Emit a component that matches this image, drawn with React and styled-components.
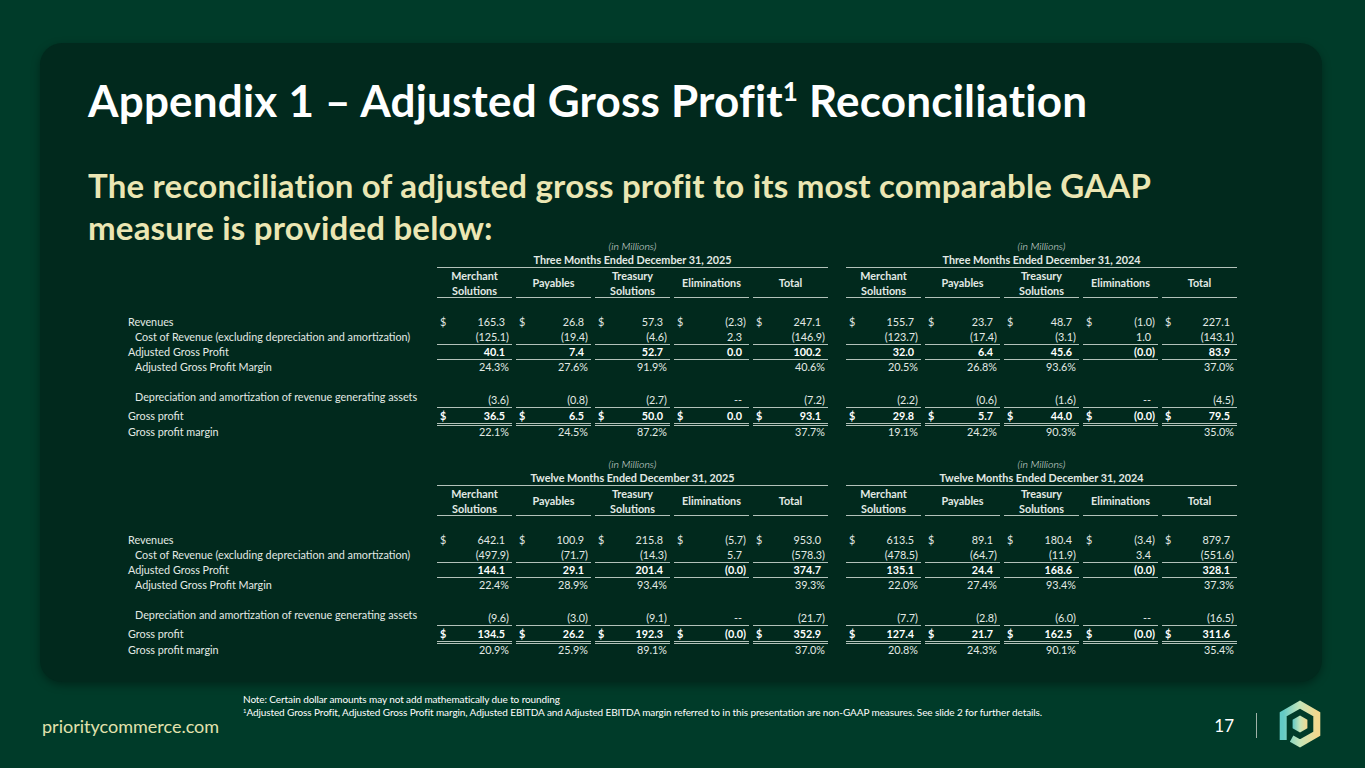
import React from "react";
import styled, { createGlobalStyle } from "styled-components";

/* Global */

const GlobalStyle = createGlobalStyle`
  body {
    margin: 0;
    background-color: #003b29;
    font-family: Lato, "Open Sans", sans-serif;
  }
`;

/* Styled Components */

const Slide = styled.div`
  width: 1365px;
  height: 768px;
  display: flex;
  flex-direction: column;
  overflow: hidden;
`;

const Panel = styled.div`
  box-sizing: border-box;
  width: 1282px;
  height: 639px;
  margin: 43px 0 0 40px;
  padding: 32px 48px 0 48px;
  border-radius: 22px;
  background-color: #01291d;
  box-shadow: rgba(0, 0, 0, 0.35) 0px 3px 8px;
`;

const Title = styled.h1`
  margin: 0;
  font-size: 44px;
  line-height: 50px;
  font-weight: 700;
  letter-spacing: 0.2px;
  color: #ffffff;

  sup {
    font-size: 26px;
    line-height: 0;
    vertical-align: 16px;
  }
`;

const Subtitle = styled.h2`
  margin: 39px 0 -8px 0;
  font-size: 33px;
  line-height: 42px;
  font-weight: 700;
  letter-spacing: 0.2px;
  color: #ebe6b3;
  max-width: 1100px;
`;

const TableBlock = styled.div`
  margin-left: 40px;
  margin-top: ${(props) => props.$top || 0}px;
  font-size: 10.8px;
  color: #e3e9e5;
`;

const Row = styled.div`
  display: flex;
  height: ${(props) => props.$h || 15}px;
  margin-top: ${(props) => props.$gap || 0}px;
  line-height: 15px;
`;

const Label = styled.div`
  box-sizing: border-box;
  width: 309px;
  padding-left: ${(props) => (props.$indent ? 7 : 0)}px;
  white-space: nowrap;
  align-self: flex-start;
`;

const Groups = styled.div`
  display: flex;
  gap: 18px;
`;

const Group = styled.div`
  display: grid;
  grid-template-columns: repeat(5, 75px);
  column-gap: 4px;
`;

const Caption = styled.div`
  width: 391px;
  text-align: center;
  font-style: italic;
  font-weight: 300;
  font-size: 10.5px;
  line-height: 12px;
`;

const Period = styled.div`
  box-sizing: border-box;
  width: 391px;
  height: 15px;
  line-height: 14px;
  text-align: center;
  font-weight: 700;
  border-bottom: 1px solid #b3c2ba;
`;

const Head = styled.div`
  box-sizing: border-box;
  height: 30px;
  display: flex;
  align-items: center;
  justify-content: center;
  text-align: center;
  font-weight: 700;
  line-height: 15px;
  border-bottom: 1px solid #b3c2ba;
`;

const lines = {
  none: "none",
  single: "1px solid #b3c2ba",
  double: "3px double #b3c2ba",
};

const Cell = styled.div`
  box-sizing: border-box;
  display: flex;
  justify-content: space-between;
  align-items: ${(props) => (props.$bottom ? "flex-end" : "center")};
  padding: 0 3px;
  border-bottom: ${(props) => lines[props.$line || "none"]};
  font-weight: ${(props) => (props.$bold ? 700 : 400)};
  color: ${(props) => (props.$bold ? "#ffffff" : "inherit")};
`;

const Value = styled.span`
  padding-right: ${(props) => (props.$pad ? 4 : 0)}px;
`;

const Footer = styled.div`
  flex: 1;
  display: flex;
  align-items: center;
  padding: 0 43px 0 42px;
`;

const Brand = styled.div`
  width: 201px;
  margin-top: 2px;
  font-size: 18px;
  color: #e2e2ae;
`;

const Notes = styled.div`
  flex: 1;
  align-self: flex-start;
  margin-top: 11px;
  font-size: 10px;
  line-height: 13px;
  letter-spacing: -0.1px;
  color: #ffffff;

  sup {
    font-size: 6px;
    vertical-align: 3px;
    line-height: 0;
  }
`;

const PageNumber = styled.div`
  font-size: 17px;
  color: #ffffff;
  margin-right: 22px;
`;

const Divider = styled.div`
  width: 1px;
  height: 25px;
  background-color: #9fb2a8;
`;

const LogoBox = styled.div`
  width: 44px;
  height: 50px;
  margin-left: 21px;
  margin-top: -2px;
`;

/* Data */

const tables = [
  {
    periods: ["Three Months Ended December 31, 2025", "Three Months Ended December 31, 2024"],
    rows: [
      ["165.3", "26.8", "57.3", "(2.3)", "247.1", "155.7", "23.7", "48.7", "(1.0)", "227.1"],
      ["(125.1)", "(19.4)", "(4.6)", "2.3", "(146.9)", "(123.7)", "(17.4)", "(3.1)", "1.0", "(143.1)"],
      ["40.1", "7.4", "52.7", "0.0", "100.2", "32.0", "6.4", "45.6", "(0.0)", "83.9"],
      ["24.3%", "27.6%", "91.9%", "", "40.6%", "20.5%", "26.8%", "93.6%", "", "37.0%"],
      ["(3.6)", "(0.8)", "(2.7)", "--", "(7.2)", "(2.2)", "(0.6)", "(1.6)", "--", "(4.5)"],
      ["36.5", "6.5", "50.0", "0.0", "93.1", "29.8", "5.7", "44.0", "(0.0)", "79.5"],
      ["22.1%", "24.5%", "87.2%", "", "37.7%", "19.1%", "24.2%", "90.3%", "", "35.0%"],
    ],
  },
  {
    periods: ["Twelve Months Ended December 31, 2025", "Twelve Months Ended December 31, 2024"],
    rows: [
      ["642.1", "100.9", "215.8", "(5.7)", "953.0", "613.5", "89.1", "180.4", "(3.4)", "879.7"],
      ["(497.9)", "(71.7)", "(14.3)", "5.7", "(578.3)", "(478.5)", "(64.7)", "(11.9)", "3.4", "(551.6)"],
      ["144.1", "29.1", "201.4", "(0.0)", "374.7", "135.1", "24.4", "168.6", "(0.0)", "328.1"],
      ["22.4%", "28.9%", "93.4%", "", "39.3%", "22.0%", "27.4%", "93.4%", "", "37.3%"],
      ["(9.6)", "(3.0)", "(9.1)", "--", "(21.7)", "(7.7)", "(2.8)", "(6.0)", "--", "(16.5)"],
      ["134.5", "26.2", "192.3", "(0.0)", "352.9", "127.4", "21.7", "162.5", "(0.0)", "311.6"],
      ["20.9%", "25.9%", "89.1%", "", "37.0%", "20.8%", "24.3%", "90.1%", "", "35.4%"],
    ],
  },
];

// one spec per line of the reconciliation
const rowSpecs = [
  { label: "Revenues", dollar: true },
  { label: "Cost of Revenue (excluding depreciation and amortization)", indent: true, line: "single" },
  { label: "Adjusted Gross Profit", bold: true, line: "single" },
  { label: "Adjusted Gross Profit Margin", indent: true },
  { label: "Depreciation and amortization of revenue generating assets", indent: true, line: "single", dep: true },
  { label: "Gross profit", dollar: true, bold: true, line: "double" },
  { label: "Gross profit margin" },
];

const columns = [
  ["Merchant", "Solutions"],
  ["Payables"],
  ["Treasury", "Solutions"],
  ["Eliminations"],
  ["Total"],
];

/* Functions */

const needsPad = (v) => v !== "" && !v.endsWith(")") && !v.endsWith("%");

const rowHeight = (spec) => (spec.dep ? 19 : spec.line === "double" ? 16 : 15);

const DataCells = ({ values, spec }) =>
  values.map((v, i) => (
    <Cell key={i} $line={spec.line} $bold={spec.bold} $bottom={spec.dep}>
      <span>{spec.dollar ? "$" : ""}</span>
      <Value $pad={needsPad(v)}>{v}</Value>
    </Cell>
  ));

const Reconciliation = ({ table, top }) => (
  <TableBlock $top={top}>
    <Row $h={13}>
      <Label />
      <Groups>
        <Caption>(in Millions)</Caption>
        <Caption>(in Millions)</Caption>
      </Groups>
    </Row>
    <Row $h={15}>
      <Label />
      <Groups>
        {table.periods.map((p) => (
          <Period key={p}>{p}</Period>
        ))}
      </Groups>
    </Row>
    <Row $h={30}>
      <Label />
      <Groups>
        {[0, 1].map((g) => (
          <Group key={g}>
            {columns.map((c) => (
              <Head key={c[0]}>
                <div>
                  {c.map((line) => (
                    <div key={line}>{line}</div>
                  ))}
                </div>
              </Head>
            ))}
          </Group>
        ))}
      </Groups>
    </Row>
    {rowSpecs.map((spec, r) => (
      <Row key={spec.label} $h={rowHeight(spec)} $gap={r === 0 ? 16 : spec.dep ? 15 : 0}>
        <Label $indent={spec.indent}>{spec.label}</Label>
        <Groups>
          <Group>
            <DataCells values={table.rows[r].slice(0, 5)} spec={spec} />
          </Group>
          <Group>
            <DataCells values={table.rows[r].slice(5)} spec={spec} />
          </Group>
        </Groups>
      </Row>
    ))}
  </TableBlock>
);

const Logo = () => (
  <svg width="44" height="50" viewBox="0 0 44 50">
    <defs>
      <linearGradient id="pcGrad" x1="0" y1="0" x2="1" y2="0">
        <stop offset="0" stopColor="#62cac6" />
        <stop offset="0.5" stopColor="#c5e5b8" />
        <stop offset="1" stopColor="#f3d88e" />
      </linearGradient>
    </defs>
    <path
      d="M5.2 41 L5.2 15.3 L22 5.6 L38.8 15.3 L38.8 34.7 L22 44.4 L13.6 39.6"
      fill="none"
      stroke="url(#pcGrad)"
      strokeWidth="7"
      strokeLinejoin="miter"
    />
    <polygon points="22,16.5 29.4,20.8 29.4,29.2 22,33.5 14.6,29.2 14.6,20.8" fill="url(#pcGrad)" />
  </svg>
);

const App = () => {
  return (
    <>
      <GlobalStyle />
      <Slide>
        <Panel>
          <Title>
            Appendix 1 – Adjusted Gross Profit<sup>1</sup> Reconciliation
          </Title>
          <Subtitle>The reconciliation of adjusted gross profit to its most comparable GAAP measure is provided below:</Subtitle>
          <Reconciliation table={tables[0]} />
          <Reconciliation table={tables[1]} top={19} />
        </Panel>
        <Footer>
          <Brand>prioritycommerce.com</Brand>
          <Notes>
            <div>Note: Certain dollar amounts may not add mathematically due to rounding</div>
            <div>
              <sup>1</sup>Adjusted Gross Profit, Adjusted Gross Profit margin, Adjusted EBITDA and Adjusted EBITDA margin
              referred to in this presentation are non-GAAP measures. See slide 2 for further details.
            </div>
          </Notes>
          <PageNumber>17</PageNumber>
          <Divider />
          <LogoBox>
            <Logo />
          </LogoBox>
        </Footer>
      </Slide>
    </>
  );
};

export default App;
